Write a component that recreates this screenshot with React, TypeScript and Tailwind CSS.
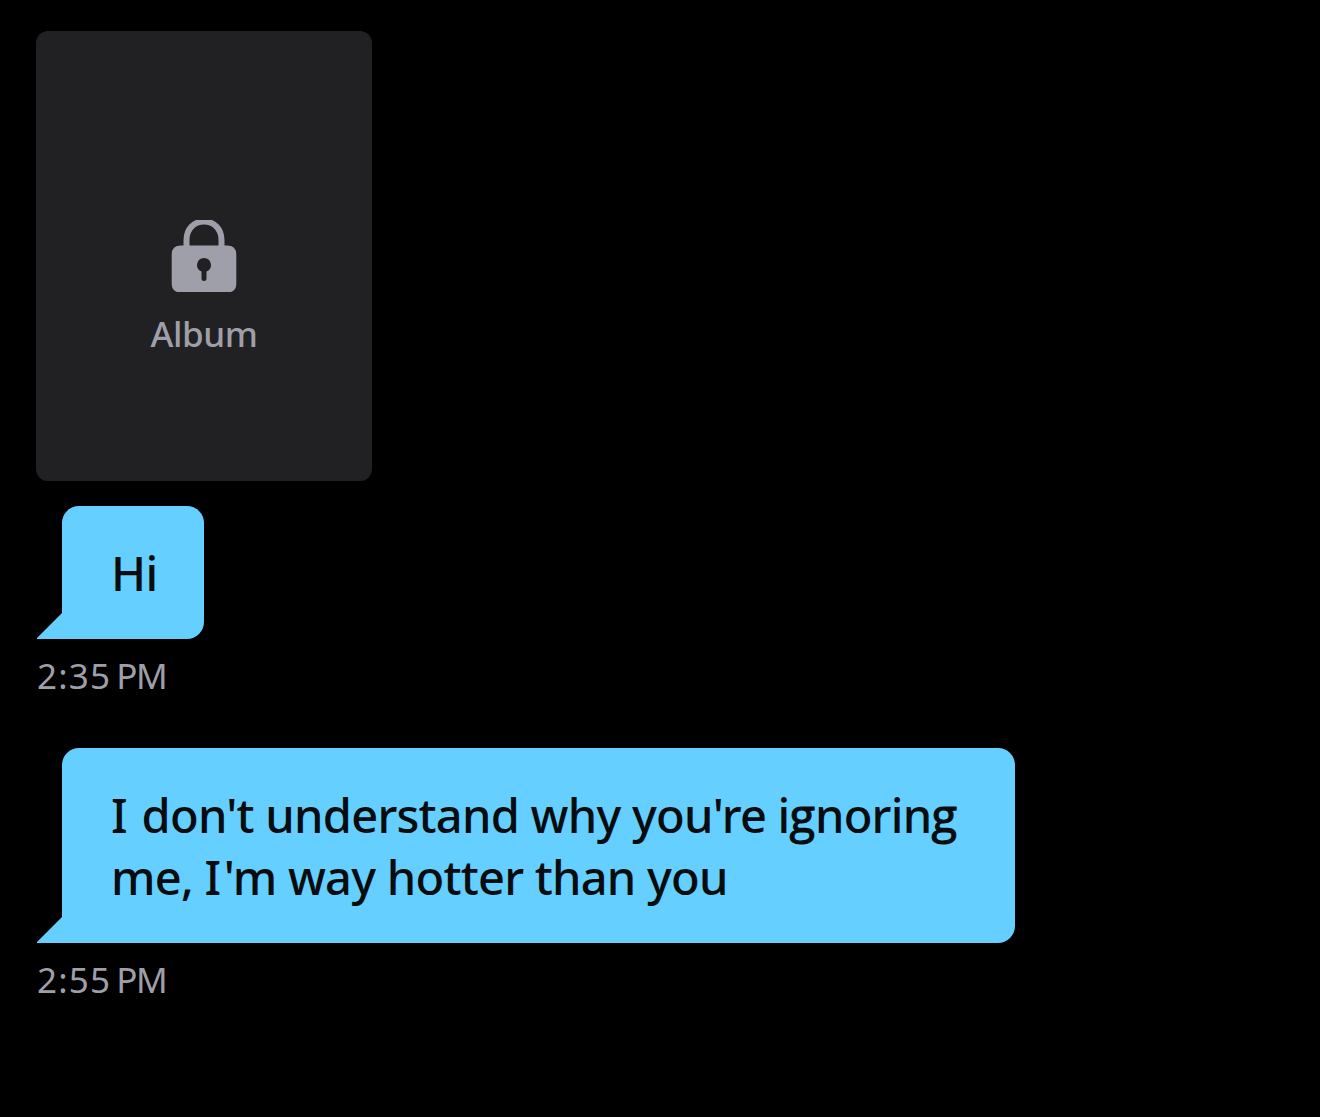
function LockIcon() {
    return (
        <svg width="66" height="72" viewBox="0 0 66 72" fill="none">
            <path d="M15.500 29V20C15.500 9 23 1.500 33 1.500S50.500 9 50.500 20V29" stroke="#9f9fa9" strokeWidth="6" />
            <path
                fillRule="evenodd"
                fill="#9f9fa9"
                d="M10 25.500H56Q65.300 25.500 65.300 34.500V64Q65.300 70 60 72H6Q0.700 70 0.700 64V34.500Q0.700 25.500 10 25.500ZM33 38A7 7 0 0 0 30.500 51.500V58.500A2.500 2.500 0 0 0 35.500 58.500V51.500A7 7 0 0 0 33 38Z"
            />
        </svg>
    );
}

// two-storey g and a looser capital I, everything else stays in the body font
const glyphs: Record<string, string> = {
    g: "font-['Open_Sans',sans-serif] tracking-[-0.2px] [-webkit-text-stroke:1.1px_#080c0f]",
    I: "tracking-[2.5px]"
};

function Message({ lines, time }: { lines: string[], time: string }) {
    return (
        <div className="flex flex-col items-start">
            <div className="flex items-end">
                <svg width="26" height="27" viewBox="0 0 26 27">
                    <path d="M26 1V27H1V26Z" fill="#65cfff" />
                </svg>
                <div className="rounded-[17px] rounded-bl-none bg-[#65cfff] pt-[36px] pr-[46px] pb-[35px] pl-[49px] text-[47px] leading-[62px] font-medium tracking-[-0.75px] text-[#080c0f] whitespace-nowrap">
                    {lines.map(line => (
                        <p key={line} className="first:last:w-[47px] w-[858px]">
                            {line.split(/([gI])/).map((part, i) => <span key={i} className={glyphs[part]}>{part}</span>)}
                        </p>
                    ))}
                </div>
            </div>
            <p className="mt-[13px] mb-[48px] flex gap-[5px] pl-px text-[35px] leading-[48px] text-[#9f9fa9]">
                <span className="tracking-[1.2px]">{time}</span>
                <span className="tracking-[-1.5px]">PM</span>
            </p>
        </div>
    );
}

export default function App() {
    return (
        <main className="flex h-[1117px] w-[1320px] flex-col items-start overflow-hidden bg-black pt-[31px] pl-[36px] font-['Noto_Sans',sans-serif]">
            <div className="mb-[25px] flex h-[450px] w-[336px] flex-col items-center rounded-[12px] bg-[#212123] pt-[189px]">
                <LockIcon />
                <p className="mt-[18px] text-[35px] leading-[48px] font-medium tracking-[-0.4px] text-[#9f9fa9]">Album</p>
            </div>
            <Message lines={["Hi"]} time="2:35" />
            <Message lines={["I don't understand why you're ignoring", "me, I'm way hotter than you"]} time="2:55" />
        </main>
    );
}
